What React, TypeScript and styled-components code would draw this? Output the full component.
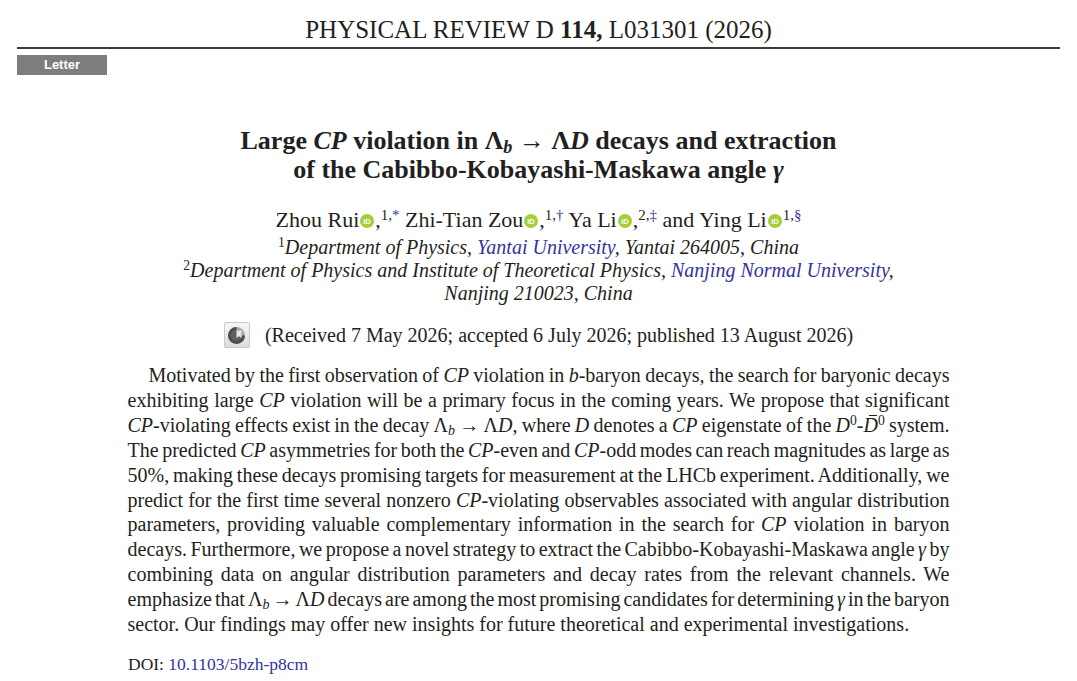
import React from "react";
import styled, { createGlobalStyle } from "styled-components";

const GlobalStyle = createGlobalStyle`
  body {
    margin: 0;
    background: #ffffff;
    color: #231f20;
    font-family: "Liberation Serif", "Times New Roman", serif;
  }
`;

const Page = styled.div`
  padding: 0 17px;
`;

const Masthead = styled.header`
  text-align: center;
  font-size: 25px;
  line-height: 28px;
  padding: 16px 0 3px;
  border-bottom: 2px solid #3b3b3b;
`;

const Badge = styled.div`
  margin-top: 6px;
  width: 90px;
  height: 20px;
  background: #7d7d7d;
  color: #ffffff;
  font: bold 13px/20px "Liberation Sans", Arial, sans-serif;
  text-align: center;
`;

const Title = styled.h1`
  margin: 51px 0 0;
  font-size: 26px;
  line-height: 29px;
  font-weight: bold;
  text-align: center;
`;

const Authors = styled.div`
  margin-top: 24px;
  font-size: 22px;
  line-height: 24px;
  text-align: center;
`;

const Affiliations = styled.div`
  margin-top: 4px;
  font-size: 20px;
  line-height: 23px;
  font-style: italic;
  text-align: center;
`;

const Link = styled.span`
  color: #33339c;
`;

const Sup = styled.sup<{ $link?: boolean }>`
  font-size: 0.68em;
  line-height: 0;
  vertical-align: 0.5em;
  font-style: normal;
  color: ${({ $link }) => ($link ? "#33339c" : "inherit")};
`;

const Sub = styled.sub`
  font-size: 0.7em;
  line-height: 0;
  vertical-align: -0.2em;
`;

const Barred = styled.i`
  position: relative;
  display: inline-block;

  &::before {
    content: "";
    position: absolute;
    top: 0.12em;
    left: 0.28em;
    width: 0.42em;
    height: 1px;
    background: currentColor;
  }
`;

const OrcidMark = styled.svg`
  width: 14px;
  height: 14px;
  margin: 0 1px;
  vertical-align: -1px;
`;

const ReceivedRow = styled.div`
  margin-top: 17px;
  display: flex;
  align-items: center;
  justify-content: center;
  gap: 15px;
  font-size: 20px;
  line-height: 26px;
`;

const UpdateButton = styled.span`
  display: inline-flex;
  width: 26px;
  height: 26px;
  box-sizing: border-box;
  border: 1px solid #c9c9c9;
  border-radius: 2px;
  background: linear-gradient(180deg, #f7f7f7 0%, #dcdcdc 100%);
  align-items: center;
  justify-content: center;
`;

const Abstract = styled.div`
  margin: 15px auto 0;
  width: 822px;
  font-size: 20px;
  line-height: 24.9px;
`;

const Line = styled.div<{ $indent?: boolean; $last?: boolean }>`
  text-align: justify;
  text-align-last: ${({ $last }) => ($last ? "left" : "justify")};
  text-indent: ${({ $indent }) => ($indent ? "21px" : "0")};
  word-spacing: ${({ $last }) => ($last ? "0" : "-2px")};
`;

const Doi = styled.div`
  margin: 17px 0 0 111px;
  font-size: 17.5px;
  line-height: 20px;
`;

const Lb = () => (
  <>
    Λ<Sub>
      <i>b</i>
    </Sub>
  </>
);

const CP = () => <i>CP</i>;

const Orcid = () => (
  <OrcidMark viewBox="0 0 14 14">
    <circle cx="7" cy="7" r="7" fill="#a6ce39" />
    <text
      x="7"
      y="9.8"
      textAnchor="middle"
      fontFamily="Liberation Sans, Arial, sans-serif"
      fontWeight="bold"
      fontSize="7.5"
      fill="#ffffff"
    >
      iD
    </text>
  </OrcidMark>
);

const CheckIcon = () => (
  <svg width="19" height="19" viewBox="0 0 19 19">
    <circle cx="9.5" cy="9.5" r="8.5" fill="#a8a8a8" />
    <path d="M9.5 1 A8.5 8.5 0 1 0 18 9.5 L14.5 9.5 A5 5 0 1 1 9.5 4.5 Z" fill="#4d4d4d" />
    <circle cx="9.5" cy="9.5" r="5" fill="#5e5e5e" />
    <path d="M9.5 4.5 L14.5 4.5 L14.5 12 L12 10.2 L9.5 12 Z" fill="#e8e8e8" />
  </svg>
);

const abstractLines: React.ReactNode[] = [
  <>
    Motivated by the first observation of <CP /> violation in <i>b</i>-baryon decays, the search for baryonic decays
  </>,
  <>
    exhibiting large <CP /> violation will be a primary focus in the coming years. We propose that significant
  </>,
  <>
    <CP />-violating effects exist in the decay <Lb /> → Λ<i>D</i>, where <i>D</i> denotes a <CP /> eigenstate of the{" "}
    <i>D</i>
    <Sup>0</Sup>-<Barred>D</Barred>
    <Sup>0</Sup> system.
  </>,
  <>
    The predicted <CP /> asymmetries for both the <CP />-even and <CP />-odd modes can reach magnitudes as large as
  </>,
  <>50%, making these decays promising targets for measurement at the LHCb experiment. Additionally, we</>,
  <>
    predict for the first time several nonzero <CP />-violating observables associated with angular distribution
  </>,
  <>
    parameters, providing valuable complementary information in the search for <CP /> violation in baryon
  </>,
  <>
    decays. Furthermore, we propose a novel strategy to extract the Cabibbo-Kobayashi-Maskawa angle <i>γ</i> by
  </>,
  <>combining data on angular distribution parameters and decay rates from the relevant channels. We</>,
  <>
    emphasize that <Lb /> → Λ<i>D</i> decays are among the most promising candidates for determining <i>γ</i> in the
    baryon
  </>,
  <>sector. Our findings may offer new insights for future theoretical and experimental investigations.</>,
];

export default function App() {
  return (
    <>
      <GlobalStyle />
      <Page>
        <Masthead>
          PHYSICAL REVIEW D <b>114,</b> L031301 (2026)
        </Masthead>
        <Badge>Letter</Badge>

        <Title>
          Large <i>CP</i> violation in <Lb /> → Λ<i>D</i> decays and extraction
          <br />
          of the Cabibbo-Kobayashi-Maskawa angle <i>γ</i>
        </Title>

        <Authors>
          Zhou Rui<Orcid />,<Sup>1,</Sup>
          <Sup $link>*</Sup> Zhi-Tian Zou<Orcid />,<Sup>1,</Sup>
          <Sup $link>†</Sup> Ya Li<Orcid />,<Sup>2,</Sup>
          <Sup $link>‡</Sup> and Ying Li<Orcid />
          <Sup>1,</Sup>
          <Sup $link>§</Sup>
        </Authors>

        <Affiliations>
          <div>
            <Sup>1</Sup>Department of Physics, <Link>Yantai University</Link>, Yantai 264005, China
          </div>
          <div>
            <Sup>2</Sup>Department of Physics and Institute of Theoretical Physics, <Link>Nanjing Normal University</Link>,
          </div>
          <div>Nanjing 210023, China</div>
        </Affiliations>

        <ReceivedRow>
          <UpdateButton>
            <CheckIcon />
          </UpdateButton>
          <span>(Received 7 May 2026; accepted 6 July 2026; published 13 August 2026)</span>
        </ReceivedRow>

        <Abstract>
          {abstractLines.map((content, i) => (
            <Line key={i} $indent={i === 0} $last={i === abstractLines.length - 1}>
              {content}
            </Line>
          ))}
        </Abstract>

        <Doi>
          DOI: <Link>10.1103/5bzh-p8cm</Link>
        </Doi>
      </Page>
    </>
  );
}
